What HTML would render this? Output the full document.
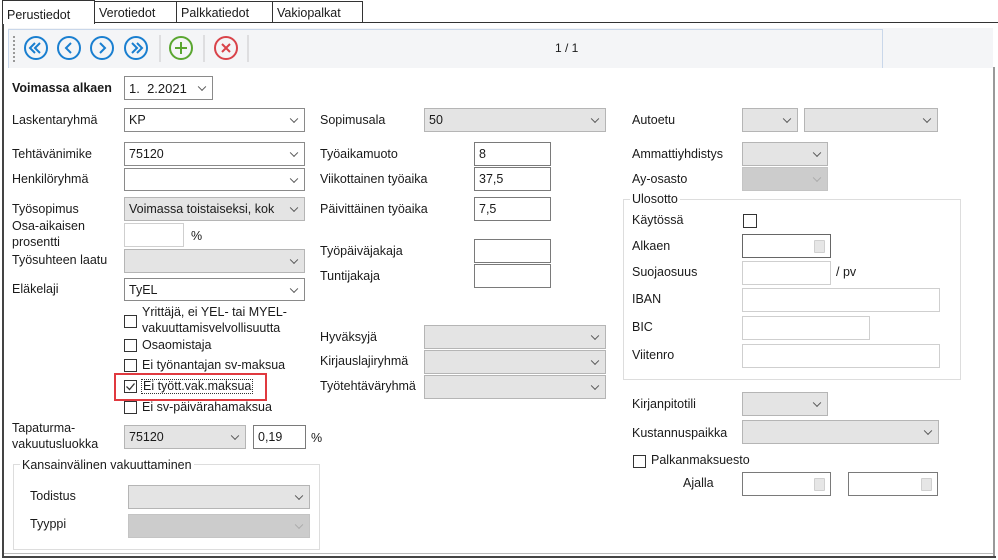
<!DOCTYPE html>
<html><head><meta charset="utf-8"><style>
*{box-sizing:border-box;margin:0;padding:0}
body{width:998px;height:560px;background:#fff;position:relative;overflow:hidden;font-family:"Liberation Sans",Arial,sans-serif;font-size:12.5px;color:#1a1a1a}
.a{position:absolute}
.l{position:absolute;line-height:14px;white-space:nowrap}
.tab{position:absolute;border:1px solid #333;border-bottom:none;background:#fff;font-size:12.5px;padding:4px 0 0 4px;height:21px;top:1px}
.sel{position:absolute;border:1px solid #8a8a8a;background:#fff;padding:4px 0 0 4px;white-space:nowrap;overflow:hidden}
.sel.g{background:#e4e4e4;border-color:#b5b5b5}
.sel.d{background:#cccccc;border-color:#c4c4c4}
.sel:after{content:"";position:absolute;right:7px;top:50%;width:5px;height:5px;border-right:1px solid #555;border-bottom:1px solid #555;transform:translateY(-70%) rotate(45deg)}
.sel.d:after{border-color:#aaa}
.inp{position:absolute;border:1px solid #7a7a7a;background:#fff;padding:4px 0 0 4px}
.inp.lt{border-color:#cfcfcf}
.cal:after{content:"";position:absolute;right:5px;top:5px;width:9px;height:11px;background:#e6e6e6;border:1px solid #d0d0d0;border-radius:1px}
.cb{position:absolute;width:13px;height:13px;border:1px solid #333;background:#fff}
.fs{position:absolute;border:1px solid #ddd}
.lg{position:absolute;background:#fff;padding:0 2px;line-height:14px}
</style></head><body>
<div class="a" style="left:94px;top:22px;width:904px;height:1px;background:#333"></div>
<div class="tab" style="left:2px;top:0;width:93px;height:24px;padding-top:7px;border-bottom:none;z-index:2">Perustiedot</div>
<div class="tab" style="left:94px;width:83px">Verotiedot</div>
<div class="tab" style="left:176px;width:97px">Palkkatiedot</div>
<div class="tab" style="left:272px;width:91px">Vakiopalkat</div>
<div class="a" style="left:2px;top:22px;width:2px;height:536px;background:#444"></div>
<div class="a" style="left:2px;top:556px;width:994px;height:2px;background:#444"></div>
<div class="a" style="left:4px;top:553px;width:990px;height:1px;background:#bbb"></div>
<div class="a" style="left:993px;top:67px;width:2px;height:489px;background:#999"></div>
<div class="a" style="left:8px;top:28px;width:985px;height:40px;background:#f4f5f7"></div>
<div class="a" style="left:8px;top:29px;width:875px;height:39px;border-top:1px solid #c9d7ea;border-right:1px solid #c9d7ea;border-left:1px solid #c9d7ea"></div>
<div class="a" style="left:13px;top:36px;width:1px;height:26px;border-left:2px dotted #999"></div>
<svg class="a" style="left:0;top:28px" width="260" height="40">
<g fill="none" stroke="#1a7fd0" stroke-width="2">
<circle cx="36" cy="20" r="11"/><circle cx="69" cy="20" r="11"/><circle cx="102" cy="20" r="11"/><circle cx="136" cy="20" r="11"/>
<path d="M35 15l-5 5 5 5M40 15l-5 5 5 5"/><path d="M71 15l-5 5 5 5"/><path d="M100 15l5 5-5 5"/><path d="M132 15l5 5-5 5M137 15l5 5-5 5"/>
</g>
<circle cx="181" cy="20" r="11" fill="none" stroke="#5aa630" stroke-width="2"/><path d="M181 14v12M175 20h12" stroke="#5aa630" stroke-width="2"/>
<circle cx="226" cy="20" r="11" fill="none" stroke="#d9434a" stroke-width="2"/><path d="M222 16l8 8M230 16l-8 8" stroke="#d9434a" stroke-width="2"/>
<path d="M160 7v27M204 7v27M248 7v27" stroke="#c8c8c8" stroke-width="1"/>
</svg>
<div class="l" style="left:555px;top:41px;font-size:12px">1 / 1</div>

<div class="l" style="left:12px;top:81px;font-weight:bold">Voimassa alkaen</div>
<div class="sel" style="left:124px;top:76px;width:89px;height:24px;font-size:13px">1.&nbsp; 2.2021</div>
<div class="l" style="left:12px;top:113px">Laskentaryhmä</div>
<div class="sel" style="left:124px;top:108px;width:181px;height:24px">KP</div>
<div class="l" style="left:12px;top:147px">Tehtävänimike</div>
<div class="sel" style="left:124px;top:142px;width:181px;height:24px">75120</div>
<div class="l" style="left:12px;top:172px">Henkilöryhmä</div>
<div class="sel" style="left:124px;top:168px;width:181px;height:23px"></div>
<div class="l" style="left:12px;top:202px">Työsopimus</div>
<div class="sel g" style="left:124px;top:197px;width:181px;height:24px">Voimassa toistaiseksi, kok</div>
<div class="l" style="left:12px;top:219px">Osa-aikaisen</div>
<div class="l" style="left:12px;top:235px">prosentti</div>
<div class="inp lt" style="left:124px;top:223px;width:60px;height:24px"></div>
<div class="l" style="left:191px;top:229px">%</div>
<div class="l" style="left:12px;top:253px">Työsuhteen laatu</div>
<div class="sel g" style="left:124px;top:249px;width:181px;height:24px"></div>
<div class="l" style="left:12px;top:282px">Eläkelaji</div>
<div class="sel" style="left:124px;top:278px;width:181px;height:23px">TyEL</div>

<div class="cb" style="left:124px;top:315px"></div>
<div class="l" style="left:142px;top:305px">Yrittäjä, ei YEL- tai MYEL-</div>
<div class="l" style="left:142px;top:321px">vakuuttamisvelvollisuutta</div>
<div class="cb" style="left:124px;top:339px"></div>
<div class="l" style="left:142px;top:338px">Osaomistaja</div>
<div class="cb" style="left:124px;top:359px"></div>
<div class="l" style="left:142px;top:358px">Ei työnantajan sv-maksua</div>
<div class="cb" style="left:124px;top:380px"></div>
<svg class="a" style="left:124px;top:380px" width="13" height="13"><path d="M2.5 6.5l3 3 5-6" fill="none" stroke="#333" stroke-width="1.3"/></svg>
<div class="l" style="left:141px;top:379px;border:1px dotted #333;padding:0 1px;line-height:13px">Ei tyött.vak.maksua</div>
<div class="a" style="left:114px;top:373px;width:153px;height:28px;border:2px solid #e0393f"></div>
<div class="cb" style="left:124px;top:401px"></div>
<div class="l" style="left:142px;top:400px">Ei sv-päivärahamaksua</div>

<div class="l" style="left:12px;top:421px">Tapaturma-</div>
<div class="l" style="left:12px;top:437px">vakuutusluokka</div>
<div class="sel g" style="left:124px;top:425px;width:122px;height:24px">75120</div>
<div class="inp" style="left:253px;top:425px;width:53px;height:24px">0,19</div>
<div class="l" style="left:311px;top:431px">%</div>

<div class="fs" style="left:13px;top:464px;width:307px;height:86px"></div>
<div class="lg" style="left:20px;top:458px">Kansainvälinen vakuuttaminen</div>
<div class="l" style="left:30px;top:489px">Todistus</div>
<div class="sel g" style="left:128px;top:485px;width:182px;height:24px"></div>
<div class="l" style="left:30px;top:517px">Tyyppi</div>
<div class="sel d" style="left:128px;top:514px;width:182px;height:24px"></div>

<div class="l" style="left:320px;top:113px">Sopimusala</div>
<div class="sel g" style="left:424px;top:108px;width:182px;height:24px">50</div>
<div class="l" style="left:320px;top:147px">Työaikamuoto</div>
<div class="inp" style="left:474px;top:142px;width:77px;height:24px">8</div>
<div class="l" style="left:320px;top:172px">Viikottainen työaika</div>
<div class="inp" style="left:474px;top:167px;width:77px;height:24px">37,5</div>
<div class="l" style="left:320px;top:202px">Päivittäinen työaika</div>
<div class="inp" style="left:474px;top:197px;width:77px;height:24px">7,5</div>
<div class="l" style="left:320px;top:244px">Työpäiväjakaja</div>
<div class="inp" style="left:474px;top:239px;width:77px;height:24px"></div>
<div class="l" style="left:320px;top:269px">Tuntijakaja</div>
<div class="inp" style="left:474px;top:264px;width:77px;height:24px"></div>
<div class="l" style="left:320px;top:330px">Hyväksyjä</div>
<div class="sel g" style="left:424px;top:325px;width:182px;height:24px"></div>
<div class="l" style="left:320px;top:354px">Kirjauslajiryhmä</div>
<div class="sel g" style="left:424px;top:350px;width:182px;height:24px"></div>
<div class="l" style="left:320px;top:379px">Työtehtäväryhmä</div>
<div class="sel g" style="left:424px;top:375px;width:182px;height:24px"></div>

<div class="l" style="left:632px;top:113px">Autoetu</div>
<div class="sel g" style="left:742px;top:108px;width:56px;height:24px"></div>
<div class="sel g" style="left:804px;top:108px;width:134px;height:24px"></div>
<div class="l" style="left:632px;top:147px">Ammattiyhdistys</div>
<div class="sel g" style="left:742px;top:142px;width:86px;height:24px"></div>
<div class="l" style="left:632px;top:172px">Ay-osasto</div>
<div class="sel d" style="left:742px;top:167px;width:86px;height:24px"></div>

<div class="fs" style="left:623px;top:199px;width:338px;height:181px"></div>
<div class="lg" style="left:630px;top:192px">Ulosotto</div>
<div class="l" style="left:632px;top:213px">Käytössä</div>
<div class="cb" style="left:743px;top:214px;width:14px;height:14px"></div>
<div class="l" style="left:632px;top:239px">Alkaen</div>
<div class="inp cal" style="left:742px;top:234px;width:89px;height:24px;border-color:#666"></div>
<div class="l" style="left:632px;top:265px">Suojaosuus</div>
<div class="inp lt" style="left:742px;top:261px;width:89px;height:24px"></div>
<div class="l" style="left:836px;top:265px">/ pv</div>
<div class="l" style="left:632px;top:292px">IBAN</div>
<div class="inp lt" style="left:742px;top:288px;width:198px;height:24px"></div>
<div class="l" style="left:632px;top:320px">BIC</div>
<div class="inp lt" style="left:742px;top:316px;width:128px;height:24px"></div>
<div class="l" style="left:632px;top:348px">Viitenro</div>
<div class="inp lt" style="left:742px;top:344px;width:198px;height:24px"></div>

<div class="l" style="left:632px;top:397px">Kirjanpitotili</div>
<div class="sel g" style="left:742px;top:392px;width:86px;height:24px"></div>
<div class="l" style="left:632px;top:426px">Kustannuspaikka</div>
<div class="sel g" style="left:742px;top:420px;width:197px;height:24px"></div>
<div class="cb" style="left:633px;top:455px"></div>
<div class="l" style="left:651px;top:453px">Palkanmaksuesto</div>
<div class="l" style="left:683px;top:476px">Ajalla</div>
<div class="inp cal" style="left:742px;top:472px;width:89px;height:24px"></div>
<div class="inp cal" style="left:848px;top:472px;width:90px;height:24px"></div>
</body></html>
